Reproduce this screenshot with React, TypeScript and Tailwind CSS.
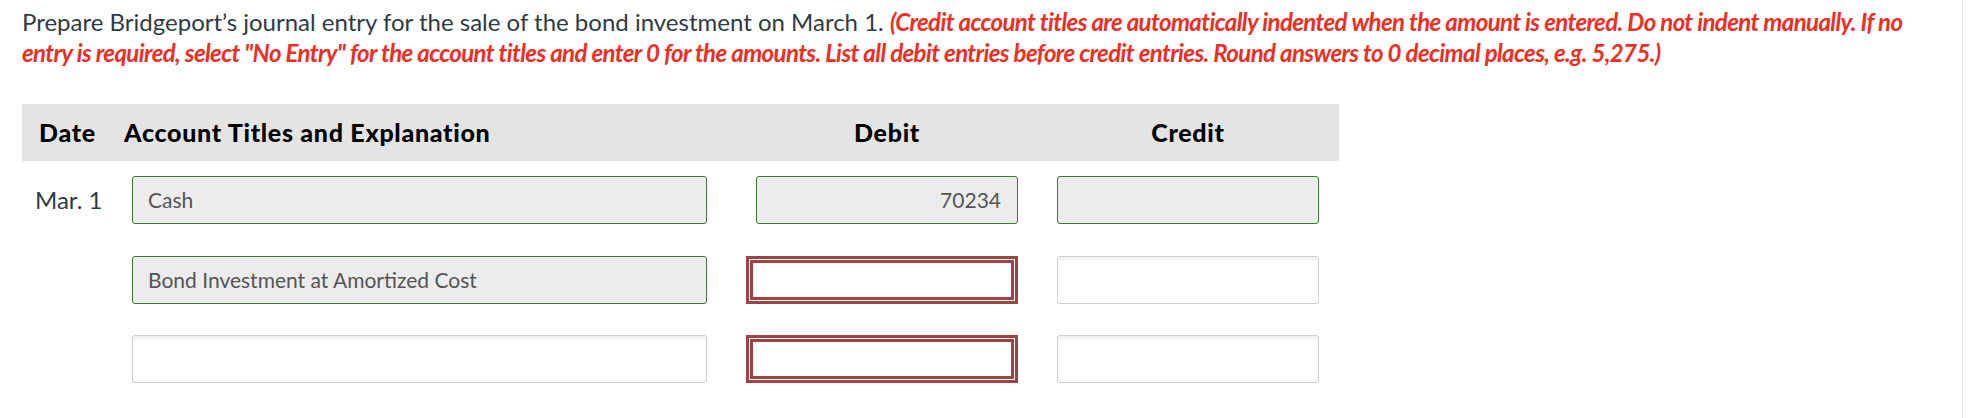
import React from "react";

const rows = [
  { date: "Mar. 1", account: "Cash", debit: "70234", filled: true, debitError: false },
  { date: "", account: "Bond Investment at Amortized Cost", debit: "", filled: true, debitError: true },
  { date: "", account: "", debit: "", filled: false, debitError: true },
];

const greenBox = "h-12 rounded-[3px] border border-[#3f7a37] bg-[#ececec] text-[#555] flex items-center";
const plainBox = "h-12 rounded-[3px] border border-[#cfcfcf] bg-white shadow-[inset_0_3px_3px_rgba(0,0,0,0.06)]";

function DebitCell({ value, error, filled }: { value: string; error?: boolean; filled: boolean }) {
  if (error) {
    return (
      <div className="ml-auto w-[272px] h-12 border-[3px] border-[#9c4343] p-px bg-white">
        <div className="h-full border-[3px] border-[#9c4343] bg-white"></div>
      </div>
    );
  }
  return (
    <div className={`ml-auto w-[262px] ${filled ? greenBox : plainBox} justify-end pr-[16px]`}>
      {value}
    </div>
  );
}

export default function App() {
  return (
    <div className="w-[1978px] h-[418px] bg-white font-['Lato',sans-serif] relative">
      <div className="pl-[22px] pt-[6px] w-[1942px]">
        <p className="text-[24px] leading-[31px] text-[#2d3b45]">
          Prepare Bridgeport’s journal entry for the sale of the bond investment on March 1.{" "}
          <span className="text-[#ee2d24] font-bold italic tracking-[-0.6px]">
            (Credit account titles are automatically indented when the amount is entered. Do not indent manually. If no entry is required, select "No Entry" for the account titles and enter 0 for the amounts. List all debit entries before credit entries. Round answers to 0 decimal places, e.g. 5,275.)
          </span>
        </p>
      </div>

      <div className="ml-[22px] mt-[36px] w-[1317px]">
        {/* header */}
        <div className="grid grid-cols-[102px_583px_311px_321px] h-[57px] items-center bg-[#e4e4e4] text-black font-black text-[25px] tracking-[0.7px]">
          <div className="pl-[17px]">Date</div>
          <div>Account Titles and Explanation</div>
          <div className="flex">
            <div className="ml-auto w-[262px] text-center">Debit</div>
          </div>
          <div className="pl-[39px]">
            <div className="w-[262px] text-center">Credit</div>
          </div>
        </div>

        {/* rows */}
        <div className="mt-[15px] flex flex-col gap-[31.5px]">
          {rows.map((r, i) => (
            <div key={i} className="grid grid-cols-[110px_575px_311px_321px] items-center">
              <div className="pl-[13px] text-[24px] text-[#2d3b45]">{r.date}</div>
              <div className={`${r.filled ? greenBox : plainBox} px-[15px] text-[21px]`}>{r.account}</div>
              <div className="flex text-[21px]">
                <DebitCell value={r.debit} error={r.debitError} filled={r.filled && !r.debitError} />
              </div>
              <div className="pl-[39px]">
                <div className={`w-[262px] ${i === 0 ? greenBox : plainBox}`}></div>
              </div>
            </div>
          ))}
        </div>
      </div>

      <div className="absolute top-0 right-[15px] w-px h-full bg-[#e6e6e6]"></div>
    </div>
  );
}
